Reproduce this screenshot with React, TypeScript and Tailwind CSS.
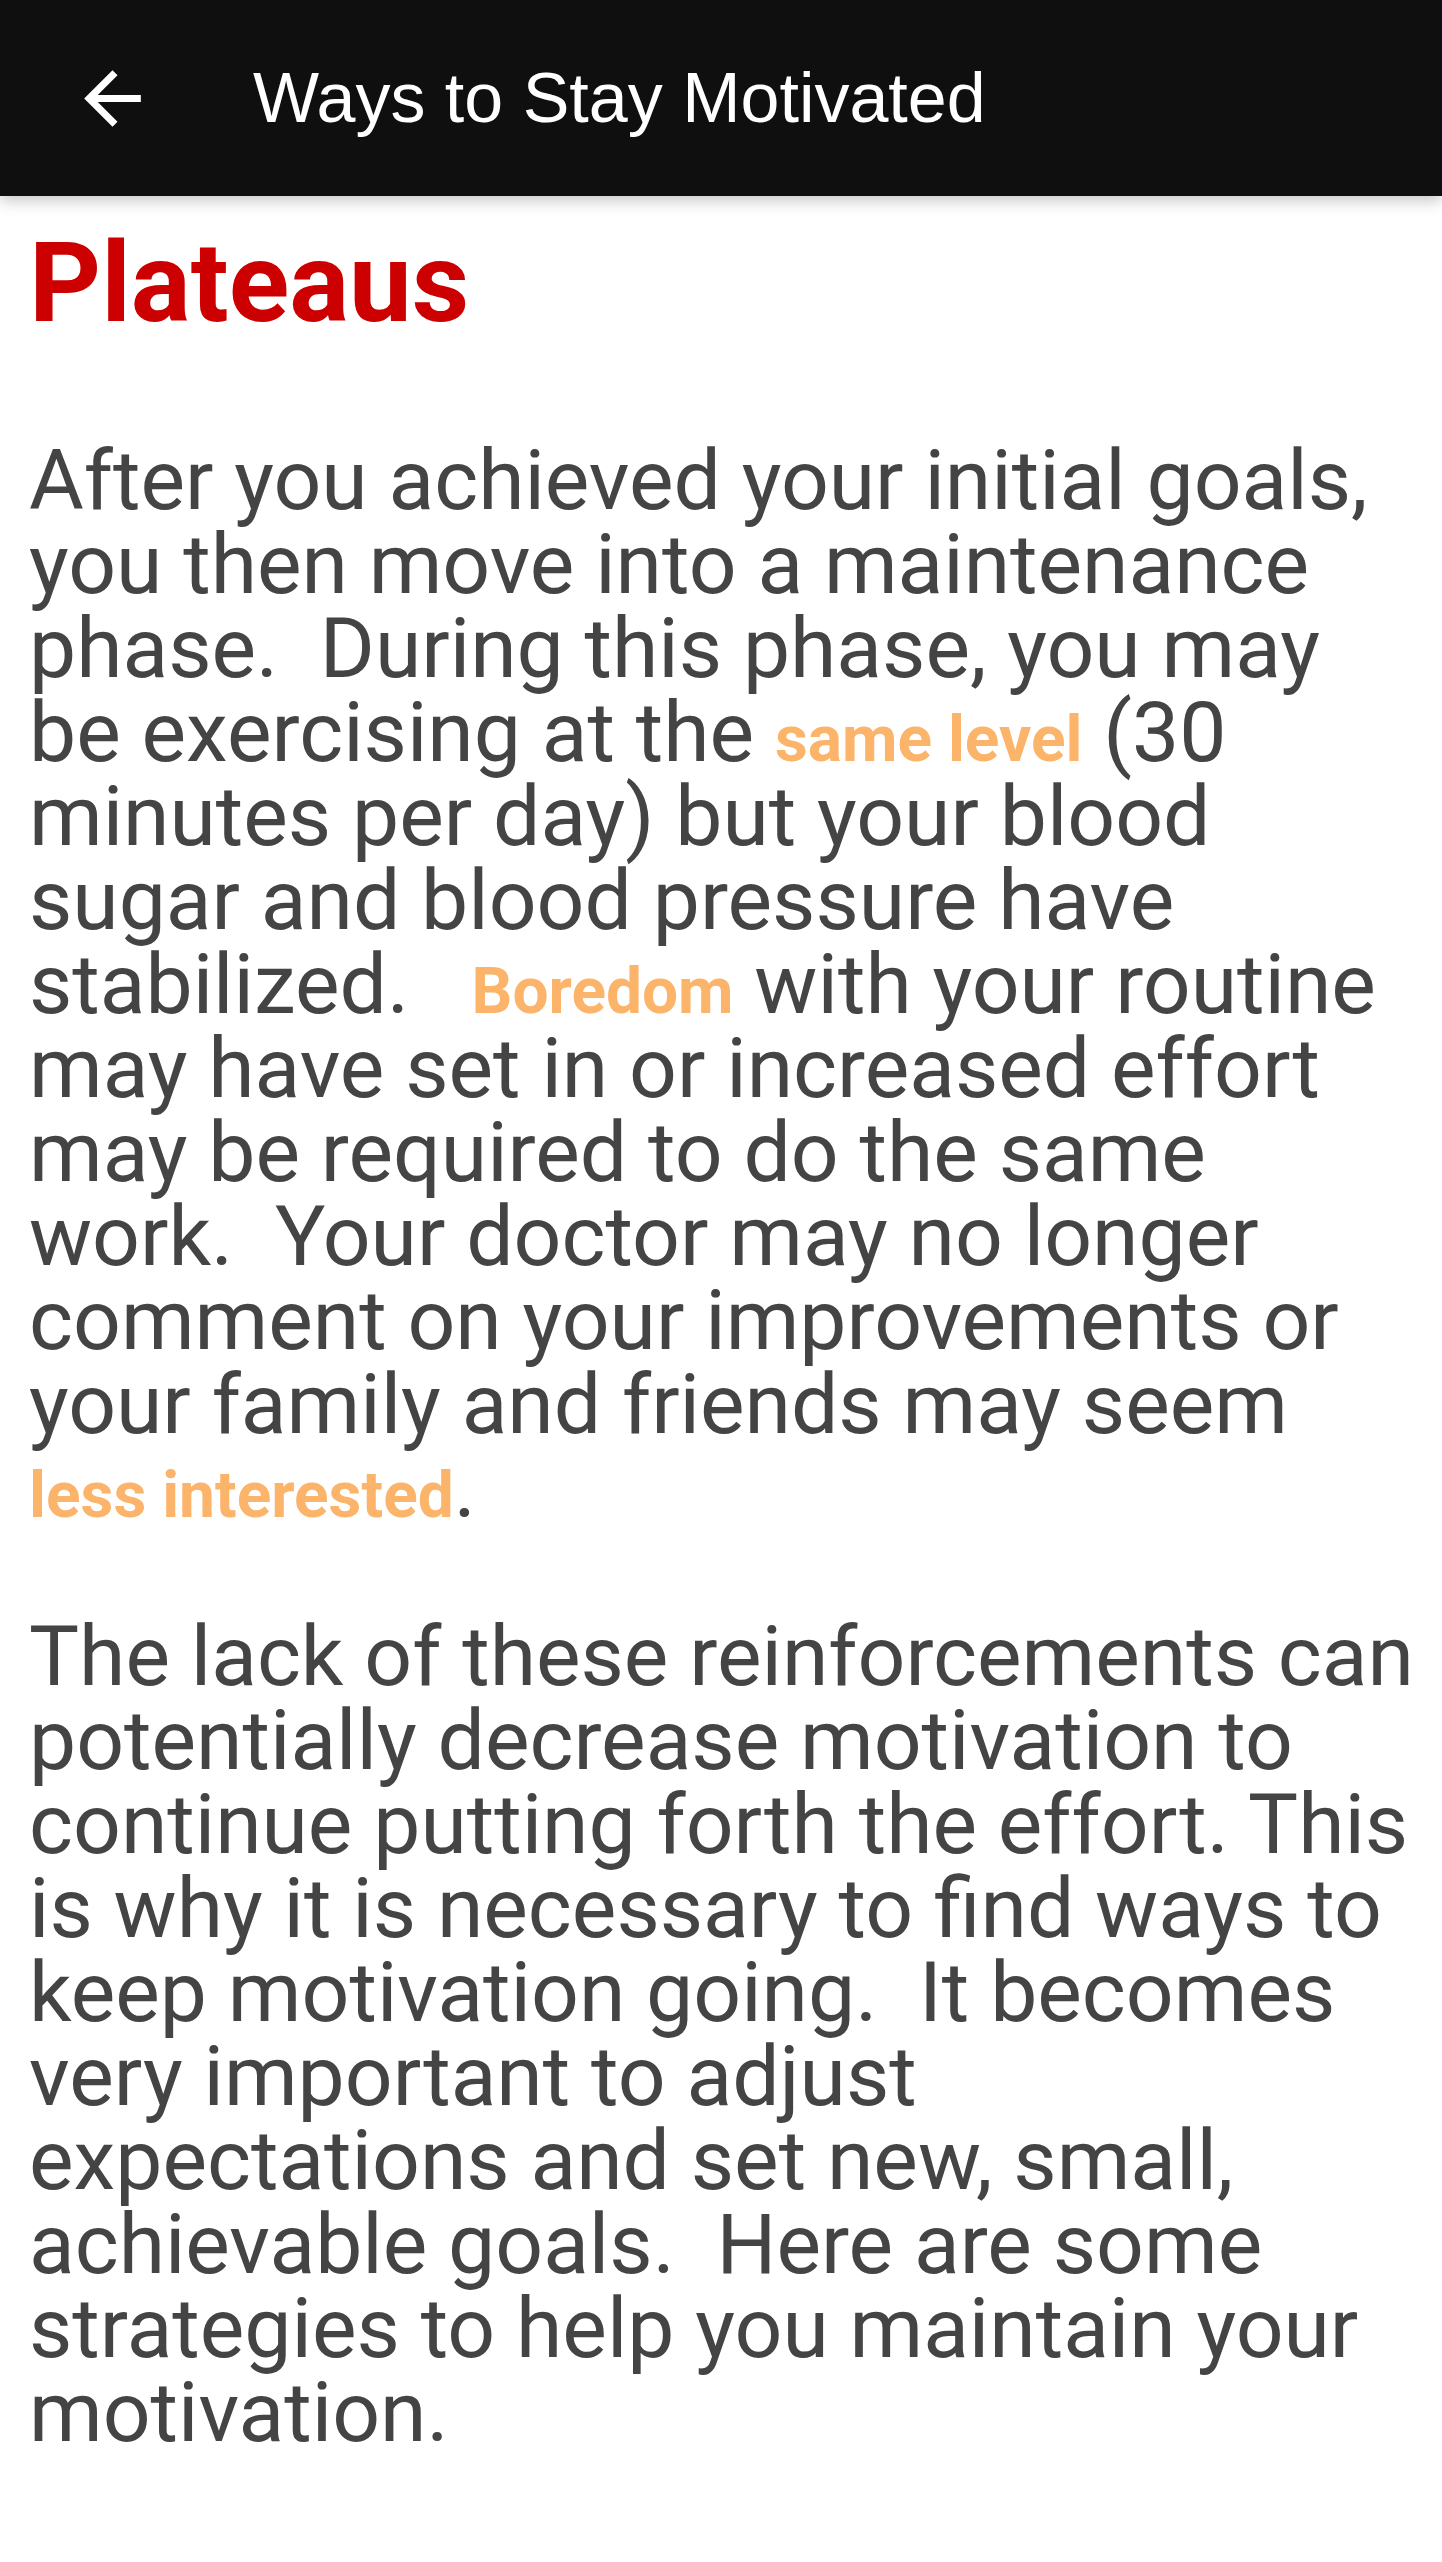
import { ArrowLeft } from "lucide-react";

const body = "font-['Roboto',sans-serif]";

function Hl({ children }: { children: React.ReactNode }) {
  return <span className="text-[64px] font-bold leading-[60px] text-[#fbb46a]">{children}</span>;
}

export default function App() {
  return (
    <div className="min-h-[2562px] bg-white">
      {/* Toolbar */}
      <div className="relative z-10 flex h-[196px] items-center bg-[#0f0f0f] shadow-[0_5px_14px_rgba(0,0,0,0.22)]">
        <button className="ml-[70px] flex h-[85px] w-[85px] items-center justify-center text-white">
          <svg viewBox="0 0 24 24" className="h-[85px] w-[85px]" fill="currentColor">
            <path d="M20 11H7.83l5.59-5.59L12 4l-8 8 8 8 1.41-1.41L7.83 13H20v-2z" />
          </svg>
        </button>
        <h1 className="ml-[98px] font-['Liberation_Sans',Arial,sans-serif] text-[70px] leading-none text-white">
          Ways to Stay Motivated
        </h1>
      </div>

      {/* Content */}
      <div className={`${body} pl-[29px] pr-[21px] pt-[31px]`}>
        <h2 className="text-[112px] font-bold leading-[112px] text-[#cc0000]">Plateaus</h2>

        <p className="mt-[100px] whitespace-pre-wrap text-[84px] leading-[84px] text-[#444444]">
          {"After you achieved your initial goals, you then move into a maintenance phase.  During this phase, you may be exercising at the "}
          <Hl>same level</Hl>
          {" (30 minutes per day) but your blood sugar and blood pressure have stabilized.   "}
          <Hl>Boredom</Hl>
          {" with your routine may have set in or increased effort may be required to do the same work.  Your doctor may no longer comment on your improvements or your family and friends may seem "}
          <Hl>less interested</Hl>
          {"."}
        </p>

        <p className="mt-[84px] whitespace-pre-wrap text-[84px] leading-[84px] text-[#444444]">
          {"The lack of these reinforcements can potentially decrease motivation to continue putting forth the effort. This is why it is necessary to find ways to keep motivation going.  It becomes very important to adjust\nexpectations and set new, small, achievable goals.  Here are some strategies to help you maintain your motivation."}
        </p>
      </div>
    </div>
  );
}
